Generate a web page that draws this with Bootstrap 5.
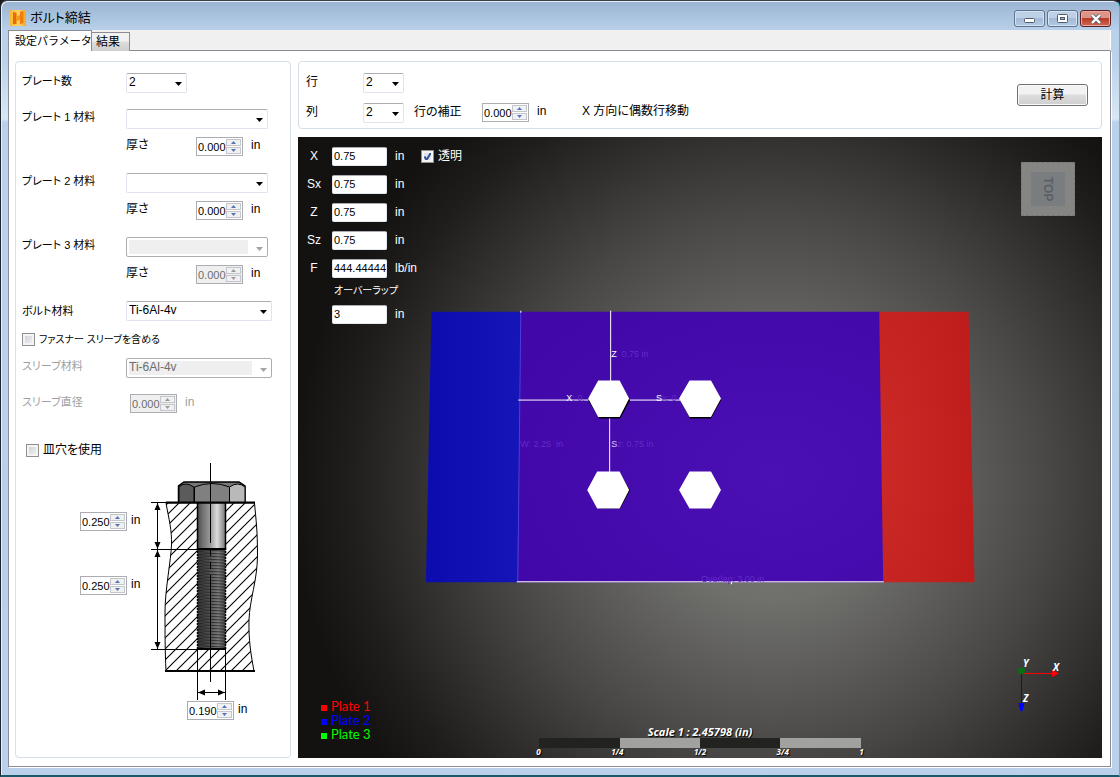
<!DOCTYPE html>
<html lang="ja">
<head>
<meta charset="utf-8">
<meta name="viewport" content="width=device-width, initial-scale=1">
<title>ボルト締結</title>
<link rel="stylesheet" href="https://cdn.jsdelivr.net/npm/bootstrap@5.3.0/dist/css/bootstrap.min.css">
<script src="https://cdn.jsdelivr.net/npm/bootstrap@5.3.0/dist/js/bootstrap.bundle.min.js"></script>
<style>
  body { font: 12px/16px "Liberation Sans", "Noto Sans CJK JP", sans-serif; font-feature-settings: "palt"; color: #000; background: #1b1b1f; }
  .app-window { min-height: 100vh; padding: 0 8px 8px 7px; border: 1px solid #20262d; border-top-color: #3b3f46; border-right-color: #35c4dd; border-bottom: 2px solid #1b5a6c; border-radius: 7px 7px 0 0;
    background: linear-gradient(#9ab4d1, #b9d1ea 30px, #bcd2ea 60px, #d9e7f5 118px, #b9d1ea 121px, #bbd0ea); box-shadow: inset 1px 1px 0 #e4eef8; }
  .title-bar { height: 29px; padding: 9px 0 0 2px; }
  .title-text { font-size: 13px; line-height: 16px; }
  .win-btns { gap: 2px; }
  .win-btn { width: 31px; height: 17px; padding: 0; border: 1px solid #5d7390; border-radius: 3px; box-shadow: inset 0 0 0 1px #d5e3f3; background: linear-gradient(#bdd0e6 45%, #a3bbd6 50%, #b3cae3); display: flex; align-items: center; justify-content: center; }
  .win-close { border-color: #5b1f23; box-shadow: inset 0 0 0 1px #e8aaa2; background: linear-gradient(#dc9486 45%, #b93b26 50%, #cc6a52); }
  .tab-strip { height: 21px; background: #f0f0f0; border-bottom: 1px solid #8b8c95; border-right: 1px solid #fff; }
  .tab-btn { height: 19px; margin-top: 2px; padding: 0 2px 0 4px; border: 1px solid #8b8c95; border-bottom: 0; background: linear-gradient(#f2f2f2 45%, #dcdcdc 50%, #cfcfcf); line-height: 16px; width: 38px; }
  .tab-btn.active { height: 21px; width: 84px; margin-top: 0; margin-bottom: -1px; background: #fff; padding-left: 6px; }
  .page-area { background: #fff; border: 1px solid #8b8c95; border-top: 0; padding: 10px 8px 8px 6px; gap: 7px; box-shadow: 1px 1px 0 #fff; }
  .group-box { border: 1px solid #d5dfe9; border-radius: 4px; }
  .side-panel { width: 276px; padding: 11px 5px 8px 6px; }
  .top-panel { height: 68px; padding: 11px 13px 0 7px; }
  .kana { font-size: 11px; }
  .kana-s { font-size: 10px; }
  .lab { width: 104px; flex: none; line-height: 16px; }
  .sub-lab { width: 70px; flex: none; }
  .pick { appearance: none; height: 20px; border: 1px solid #e0e3ec; border-top-color: #abadb3; border-radius: 2px; padding: 0 16px 2px 2px; line-height: 16px; color: #000;
    background: #fff url("data:image/svg+xml,%3Csvg xmlns='http://www.w3.org/2000/svg' width='7' height='4'%3E%3Cpath d='M0 0h7L3.500 4z'/%3E%3C/svg%3E") no-repeat right 4px top 8px; }
  .pick:disabled { opacity: 1; color: #6d6d6d; border-color: #abadb3; background: url("data:image/svg+xml,%3Csvg xmlns='http://www.w3.org/2000/svg' width='7' height='4'%3E%3Cpath fill='%23a5a5a5' d='M0 0h7L3.500 4z'/%3E%3C/svg%3E") no-repeat right 4px top 9px, linear-gradient(#efefef, #efefef) no-repeat 2px 2px / calc(100% - 21px) 14px, #fff; }
  .w-60s { width: 61px; } .w-142s { width: 142px; } .w-146s { width: 146px; } .w-41s { width: 41px; }
  .spin { width: 47px; height: 19px; border: 1px solid #abadb3; background: #fff; display: flex; padding: 1px; flex: none; }
  .spin input { width: 28px; border: 0; padding: 0; background: transparent; font: 11px/14px "Liberation Sans", sans-serif; outline: 0; min-width: 0; color: inherit; }
  .spin .arrows { width: 15px; display: flex; flex-direction: column; gap: 1px; }
  .spin button { flex: 1; min-height: 0; border: 1px solid #c3c6cc; background: #f1f1f1; padding: 0; display: flex; align-items: center; justify-content: center; color: #5673bd; }
  .spin svg { display: block; }
  .spin.off { background: #efefef; color: #6d6d6d; } .spin.off button { color: #9b9b9b; }
  .tick { appearance: none; width: 13px; height: 13px; margin: 0; flex: none; border: 1px solid #8e8f8f; background: linear-gradient(135deg, #c8ccd2, #f6f6f6); box-shadow: inset 0 0 0 2px #f4f4f4; }
  .tick:checked { background: url("data:image/svg+xml,%3Csvg xmlns='http://www.w3.org/2000/svg' width='11' height='11'%3E%3Cpath d='M2.500 5.500l2 3.500L9 1.500' fill='none' stroke='%23344f9c' stroke-width='2'/%3E%3C/svg%3E") no-repeat, #dfe3ea; }
  .dim { color: #a0a0a0; }
  .plate-group { height: 64px; }
  .bolt-row { height: 20px; } .sleeve-row { height: 37px; } .sink-row { margin-top: 29px; }
  .grid-row { height: 30px; } .grid-lab { width: 57px; line-height: 18px; } .off-lab { width: 78px; padding-left: 10px; line-height: 18px; } .off-unit { width: 45px; }
  .calc-btn { width: 71px; height: 22px; padding: 0; margin-top: 11px; border: 1px solid #707070; border-radius: 3px; box-shadow: inset 0 0 0 1px #fbfbfb; background: linear-gradient(#f2f2f2 45%, #dddddd 50%, #cfcfcf); }
  .viewport { position: relative; min-height: 600px; color: #fff; background: radial-gradient(480px 470px at 59% 56%, #7c7c79 0, #6f6f6c 25%, #5a5957 43%, #484745 58%, #32312f 74%, #1f1e1c 88%, #131210 100%); overflow: hidden; }
  .scene { position: absolute; inset: 0; width: 100%; height: 100%; }
  .overlay-form { position: relative; padding: 5px 0 0 7px; }
  .ov-row { height: 28px; display: flex; align-items: center; }
  .ov-lab { width: 18px; text-align: center; margin-right: 9px; }
  .ov-title { padding-left: 29px; line-height: 18px; }
  .ov-in { width: 55px; height: 19px; border: 1px solid #e3e9ef; border-top-color: #abadb3; border-radius: 2px; padding: 0 0 0 1px; font: 11px/15px "Liberation Sans", sans-serif; margin-right: 8px; background: #fff; }
  .cube { position: absolute; right: 27px; top: 25px; width: 54px; height: 54px; background: #858583; padding: 9px; border: 1px dashed #777775; }
  .cube-face { width: 34px; height: 34px; background: #7a7d80; color: #5b6067; writing-mode: vertical-rl; font: bold 12px/34px "Liberation Sans", sans-serif; text-align: center; }
  .axes { position: absolute; right: 36px; bottom: 42px; }
  .legend { position: absolute; left: 23px; bottom: 17px; font: 13px/14px Lato, sans-serif; }
  .legend i { width: 6px; height: 6px; margin: 3px 4px 0 0; }
  .legend i { background: currentColor; }
  .leg-1 { color: #f00; } .leg-2 { color: #00f; } .leg-3 { color: #0f0; }
  .scale-box { position: absolute; left: 30%; width: 40%; bottom: 2px; text-shadow: 1px 1px 1px #000; }
  .scale-title { font: italic bold 11px/12px "Open Sans", sans-serif; }
  .scale-bar { height: 10px; } .scale-bar div { flex: 1; background: #222220; } .scale-bar div:nth-child(even) { background: #a1a19f; }
  .scale-nums { font: italic bold 8px/8px "Open Sans", sans-serif; margin: 0 -3px; }
  .fig { padding-left: 58px; margin-top: 5px; }
  .fig-spins { width: 70px; padding-top: 49px; gap: 45px; }
  .fig-foot { padding-left: 107px; margin-top: 1px; }
  .right-col { min-width: 0; }
</style>
</head>
<body>
<svg width="0" height="0" class="position-absolute"><defs>
  <symbol id="up" viewBox="0 0 5 3"><path fill="currentColor" d="M0 3L2.500 0L5 3z"/></symbol>
  <symbol id="dn" viewBox="0 0 5 3"><path fill="currentColor" d="M0 0L2.500 3L5 0z"/></symbol>
</defs></svg>
<div class="app-window d-flex flex-column">
  <header class="title-bar d-flex align-items-start">
    <svg class="me-1" width="16" height="16" viewBox="0 0 16 16"><defs><linearGradient id="lg" x2="1"><stop stop-color="#fbb62c"/><stop offset=".5" stop-color="#fdd36a"/><stop offset="1" stop-color="#f8a72a"/></linearGradient></defs><rect width="16" height="16" fill="url(#lg)"/><path d="M3 2l4 1v3l3-1V2l4-1v12l-4 1v-4l-3 1v3H3z" fill="#f59a1c"/><path d="M3 2l3 1v11H3z" fill="#e8690b"/><path d="M10 2l3-1v12l-3 1z" fill="#f07d10"/></svg>
    <span class="title-text">ボルト締結</span>
    <div class="win-btns d-flex ms-auto">
      <button class="win-btn" type="button" aria-label="最小化"><svg class="mt-1" width="12" height="5"><rect x=".5" y=".5" width="10" height="4" rx="1" fill="#fff" stroke="#515c6e"/></svg></button>
      <button class="win-btn" type="button" aria-label="最大化"><svg width="12" height="9"><rect x=".5" y=".5" width="10" height="8" rx="1" fill="#fff" stroke="#515c6e"/><rect x="3.500" y="3.500" width="4" height="2" fill="#9eb6d3" stroke="#515c6e"/></svg></button>
      <button class="win-btn win-close" type="button" aria-label="閉じる"><svg width="12" height="10" viewBox="0 0 12 10"><path d="M2 1l8 8M10 1L2 9" stroke="#5a5f70" stroke-width="4"/><path d="M2 1l8 8M10 1L2 9" stroke="#fff" stroke-width="2.400"/></svg></button>
    </div>
  </header>
  <nav class="tab-strip d-flex align-items-start" role="tablist">
    <button class="tab-btn kana active text-start text-nowrap" role="tab" type="button">設定パラメータ</button>
    <button class="tab-btn text-start text-nowrap border-start-0" role="tab" type="button">結果</button>
  </nav>
  <main class="page-area d-flex flex-grow-1">
    <form class="group-box side-panel flex-shrink-0">
      <div class="d-flex mb-3"><label class="lab kana" for="np">プレート数</label><select id="np" class="pick w-60s"><option>2</option></select></div>
      <div class="plate-group"><div class="d-flex mb-2"><label class="lab kana" for="m1">プレート 1 材料</label><select id="m1" class="pick w-142s"><option></option></select></div>
        <div class="d-flex"><span class="lab"></span><label class="sub-lab" for="t1">厚さ</label><div class="spin me-2"><input id="t1" value="0.000"><span class="arrows"><button type="button" aria-label="増"><svg width="5" height="3"><use href="#up"/></svg></button><button type="button" aria-label="減"><svg width="5" height="3"><use href="#dn"/></svg></button></span></div>in</div></div>
      <div class="plate-group"><div class="d-flex mb-2"><label class="lab kana" for="m2">プレート 2 材料</label><select id="m2" class="pick w-142s"><option></option></select></div>
        <div class="d-flex"><span class="lab"></span><label class="sub-lab" for="t2">厚さ</label><div class="spin me-2"><input id="t2" value="0.000"><span class="arrows"><button type="button" aria-label="増"><svg width="5" height="3"><use href="#up"/></svg></button><button type="button" aria-label="減"><svg width="5" height="3"><use href="#dn"/></svg></button></span></div>in</div></div>
      <div class="plate-group"><div class="d-flex mb-2"><label class="lab kana" for="m3">プレート 3 材料</label><select id="m3" class="pick w-142s" disabled><option></option></select></div>
        <div class="d-flex"><span class="lab"></span><label class="sub-lab" for="t3">厚さ</label><div class="spin off me-2"><input id="t3" value="0.000" disabled><span class="arrows"><button type="button" disabled aria-label="増"><svg width="5" height="3"><use href="#up"/></svg></button><button type="button" disabled aria-label="減"><svg width="5" height="3"><use href="#dn"/></svg></button></span></div>in</div></div>
      <div class="bolt-row d-flex align-items-center"><label class="lab kana" for="bm">ボルト材料</label><select id="bm" class="pick w-146s"><option>Ti-6Al-4v</option></select></div>
      <div class="sleeve-row d-flex align-items-center gap-1"><input type="checkbox" class="tick" id="slv"><label class="kana-s" for="slv">ファスナー スリーブを含める</label></div>
      <div class="d-flex mb-3"><label class="lab kana dim" for="sm">スリーブ材料</label><select id="sm" class="pick w-146s" disabled><option>Ti-6Al-4v</option></select></div>
      <div class="d-flex"><label class="lab kana dim" for="sd">スリーブ直径</label><div class="spin off ms-1 me-2"><input id="sd" value="0.000" disabled><span class="arrows"><button type="button" disabled aria-label="増"><svg width="5" height="3"><use href="#up"/></svg></button><button type="button" disabled aria-label="減"><svg width="5" height="3"><use href="#dn"/></svg></button></span></div><span class="dim">in</span></div>
      <div class="sink-row d-flex align-items-center gap-1 ps-1"><input type="checkbox" class="tick" id="cs"><label for="cs">皿穴を使用</label></div>
      <div class="fig">
        <div class="d-flex">
          <div class="fig-spins d-flex flex-column">
            <div class="d-flex gap-1"><div class="spin"><input aria-label="シャンク長" value="0.250"><span class="arrows"><button type="button" aria-label="増"><svg width="5" height="3"><use href="#up"/></svg></button><button type="button" aria-label="減"><svg width="5" height="3"><use href="#dn"/></svg></button></span></div>in</div>
            <div class="d-flex gap-1"><div class="spin"><input aria-label="ねじ長" value="0.250"><span class="arrows"><button type="button" aria-label="増"><svg width="5" height="3"><use href="#up"/></svg></button><button type="button" aria-label="減"><svg width="5" height="3"><use href="#dn"/></svg></button></span></div>in</div>
          </div>
          <svg width="112" height="237" viewBox="150 463 112 237">
            <defs>
              <pattern id="hatch" width="11" height="11" patternUnits="userSpaceOnUse"><path d="M-1 12L12 -1M-1 1L1 -1M10 12L12 10" stroke="#000" stroke-width="1.100"/></pattern>
              <pattern id="thr" width="29" height="3" patternUnits="userSpaceOnUse"><path d="M0 1L29 2.500" stroke="#222" stroke-width=".8"/></pattern>
              <linearGradient id="shank" x2="1"><stop stop-color="#4a4a4a"/><stop offset=".15" stop-color="#6a6a6a"/><stop offset=".45" stop-color="#9a9a9a"/><stop offset=".7" stop-color="#dcdcdc"/><stop offset=".85" stop-color="#a8a8a8"/><stop offset="1" stop-color="#777"/></linearGradient>
              <linearGradient id="thread" x2="1"><stop stop-color="#333"/><stop offset=".4" stop-color="#4c4c4c"/><stop offset=".75" stop-color="#7c7c7c"/><stop offset="1" stop-color="#444"/></linearGradient>
            </defs>
            <path d="M166 503C169 520 172 530 171.500 545S165 590 165 612S165 650 166 671H254C251 655 248.500 640 249 620S257.500 580 257.500 555S256 520 254.500 503z" fill="#fff"/>
            <path d="M166 503C169 520 172 530 171.500 545S165 590 165 612S165 650 166 671H254C251 655 248.500 640 249 620S257.500 580 257.500 555S256 520 254.500 503z" fill="url(#hatch)" stroke="#000" stroke-width="1"/>
            <path d="M166 502.500H255M165 671H255" stroke="#000" stroke-width="2"/>
            <rect x="197.500" y="503" width="28" height="46" fill="url(#shank)" stroke="#000" stroke-width="1.500"/>
            <rect x="197.500" y="549" width="28" height="100" fill="url(#thread)"/><rect x="197.500" y="549" width="28" height="100" fill="url(#thr)" stroke="#000" stroke-width="1.500" stroke-dasharray="2 1"/>
            <path d="M197 549H226M197 649H226" stroke="#000" stroke-width="2"/>
            <path d="M178.500 502V486L184 482H239L245 486V502z" fill="#777" stroke="#000" stroke-width="1.500"/>
            <path d="M179 502V487Q185 481 194 487V502z" fill="#5b5b5b" stroke="#000"/><path d="M194.500 502V487Q212 480 229.500 487V502z" fill="#808080" stroke="#000"/><path d="M229.500 502V487Q238 481 245 487V502z" fill="#b9b9b9" stroke="#000"/>
            <path d="M210.500 463V543M210.500 548V556M210.500 562V569M210.500 575V682M151 502.500H197M151 549.500H197M151 649.500H197M157.500 503V649M197.500 650V700M225.500 650V700M198 692.500H225" stroke="#000"/>
            <path d="M157.500 503l-3 7h6zM157.500 549l-3-7h6zM157.500 550l-3 7h6zM157.500 649l-3-7h6zM198 692.500l7-3v6zM225 692.500l-7-3v6z"/>
          </svg>
        </div>
        <div class="fig-foot d-flex gap-1"><div class="spin"><input aria-label="直径" value="0.190"><span class="arrows"><button type="button" aria-label="増"><svg width="5" height="3"><use href="#up"/></svg></button><button type="button" aria-label="減"><svg width="5" height="3"><use href="#dn"/></svg></button></span></div>in</div>
      </div>
    </form>
    <div class="right-col d-flex flex-column flex-grow-1 gap-2">
      <section class="group-box top-panel d-flex">
        <div class="flex-grow-1">
          <div class="grid-row d-flex"><label class="grid-lab" for="rows">行</label><select id="rows" class="pick w-41s"><option>2</option></select></div>
          <div class="d-flex"><label class="grid-lab" for="cols">列</label><select id="cols" class="pick w-41s"><option>2</option></select><label class="off-lab" for="off">行の補正</label><div class="spin me-2"><input id="off" value="0.000"><span class="arrows"><button type="button" aria-label="増"><svg width="5" height="3"><use href="#up"/></svg></button><button type="button" aria-label="減"><svg width="5" height="3"><use href="#dn"/></svg></button></span></div><span class="off-unit">in</span><span>X 方向に偶数行移動</span></div>
        </div>
        <button type="button" class="calc-btn flex-shrink-0">計算</button>
      </section>
      <section class="viewport flex-grow-1">
        <svg class="scene" viewBox="298 137 804 622" font-family="Liberation Sans, sans-serif" font-size="9">
          <defs>
            <linearGradient id="bl" x2="1"><stop stop-color="#0c0cae"/><stop offset="1" stop-color="#1515b8"/></linearGradient>
            <radialGradient id="pu" cx=".7" cy=".6" r=".8"><stop stop-color="#4b10b4"/><stop offset="1" stop-color="#4107a8"/></radialGradient>
            <radialGradient id="rd" cx="0" cy=".55" r="1.100"><stop stop-color="#cc2a27"/><stop offset="1" stop-color="#bd1c1a"/></radialGradient>
          </defs>
          <path d="M431 312H521L517 583H425.500z" fill="url(#bl)"/>
          <path d="M879 312H969L975 583H883z" fill="url(#rd)"/>
          <path d="M520.500 312H879.500L883.500 583H517z" fill="url(#pu)"/>
          <path d="M520.500 312L517.500 583" stroke="#4a3fe0" stroke-width="1"/>
          <path d="M610.500 311V382M609.500 417V473M518 400.500H590M629 400.500H681M516.500 582.500H884M731.500 582V585M520.500 311V313" stroke="#fff" fill="none"/>
          <path d="M588 401L599 383H620L630 401L620 419H599zM680 401L690 383H711L721 401L711 419H690zM588 492L598 474H620L630 491L620 509H599z"/>
          <path fill="#fff" d="M588 399L598 381H619.500L629 399L619.500 417.500H598zM679 399L689.500 381H711L721 399L711 417.500H689.500zM587 490.500L597 472H619.500L629 490.500L619.500 509H597zM679 490.500L689.500 472H711L721 490.500L711 509H689.500z"/>
          <g fill="#632bc5"><text x="611" y="357"><tspan fill="#fff">Z</tspan>&#160; 0.75 in</text><text x="520" y="447">W: 2.25&#160; in</text><text x="611" y="447"><tspan fill="#d5c8ff">S</tspan>z: 0.75 in</text><text x="566" y="401"><tspan fill="#fff">X</tspan>: 0.</text><text x="656" y="401"><tspan fill="#fff">S</tspan>x: 0</text><text x="701" y="583">Overlap: 3.00 in</text></g>
        </svg>
        <div class="overlay-form">
          <div class="d-flex"><div>
            <div class="ov-row"><label class="ov-lab" for="vx">X</label><input class="ov-in" id="vx" value="0.75">in</div>
            <div class="ov-row"><label class="ov-lab" for="vsx">Sx</label><input class="ov-in" id="vsx" value="0.75">in</div>
            <div class="ov-row"><label class="ov-lab" for="vz">Z</label><input class="ov-in" id="vz" value="0.75">in</div>
            <div class="ov-row"><label class="ov-lab" for="vsz">Sz</label><input class="ov-in" id="vsz" value="0.75">in</div>
            <div class="ov-row"><label class="ov-lab" for="vf">F</label><input class="ov-in" id="vf" value="444.44444">lb/in</div>
            <label for="vo" class="ov-title kana-s d-block">オーバーラップ</label>
            <div class="ov-row"><span class="ov-lab"></span><input class="ov-in" id="vo" value="3">in</div>
          </div>
          <div class="ov-row gap-1 ms-1"><input type="checkbox" class="tick" id="tr" checked><label for="tr">透明</label></div></div>
        </div>
        <div class="cube"><div class="cube-face">TOP</div></div>
        <svg class="axes" width="50" height="60" viewBox="1016 657 50 60"><path d="M1021.500 674V704" stroke="#00e"/><path d="M1018.500 704h6l-2 8h-2z" fill="#00f"/><path d="M1022 674.500H1054" stroke="#f00"/><path d="M1052 671l7 3.500l-7 3.500z" fill="#f00"/><rect x="1018" y="669" width="7" height="6" rx="2" fill="#0a6e12"/><g fill="#fff" font-family="Open Sans, sans-serif" font-size="10" font-weight="bold" font-style="italic"><text x="1023" y="668">Y</text><text x="1053" y="672">X</text><text x="1023" y="703">Z</text></g></svg>
        <div class="legend">
          <div class="leg-1 d-flex align-items-center"><i></i>Plate 1</div>
          <div class="leg-2 d-flex align-items-center"><i></i>Plate 2</div>
          <div class="leg-3 d-flex align-items-center"><i></i>Plate 3</div>
        </div>
        <div class="scale-box">
          <div class="scale-title text-center">Scale 1 : 2.45798 (in)</div>
          <div class="scale-bar d-flex"><div></div><div></div><div></div><div></div></div>
          <div class="scale-nums d-flex justify-content-between"><span>0</span><span>1/4</span><span>1/2</span><span>3/4</span><span>1</span></div>
        </div>
      </section>
    </div>
  </main>
</div>
</body>
</html>
